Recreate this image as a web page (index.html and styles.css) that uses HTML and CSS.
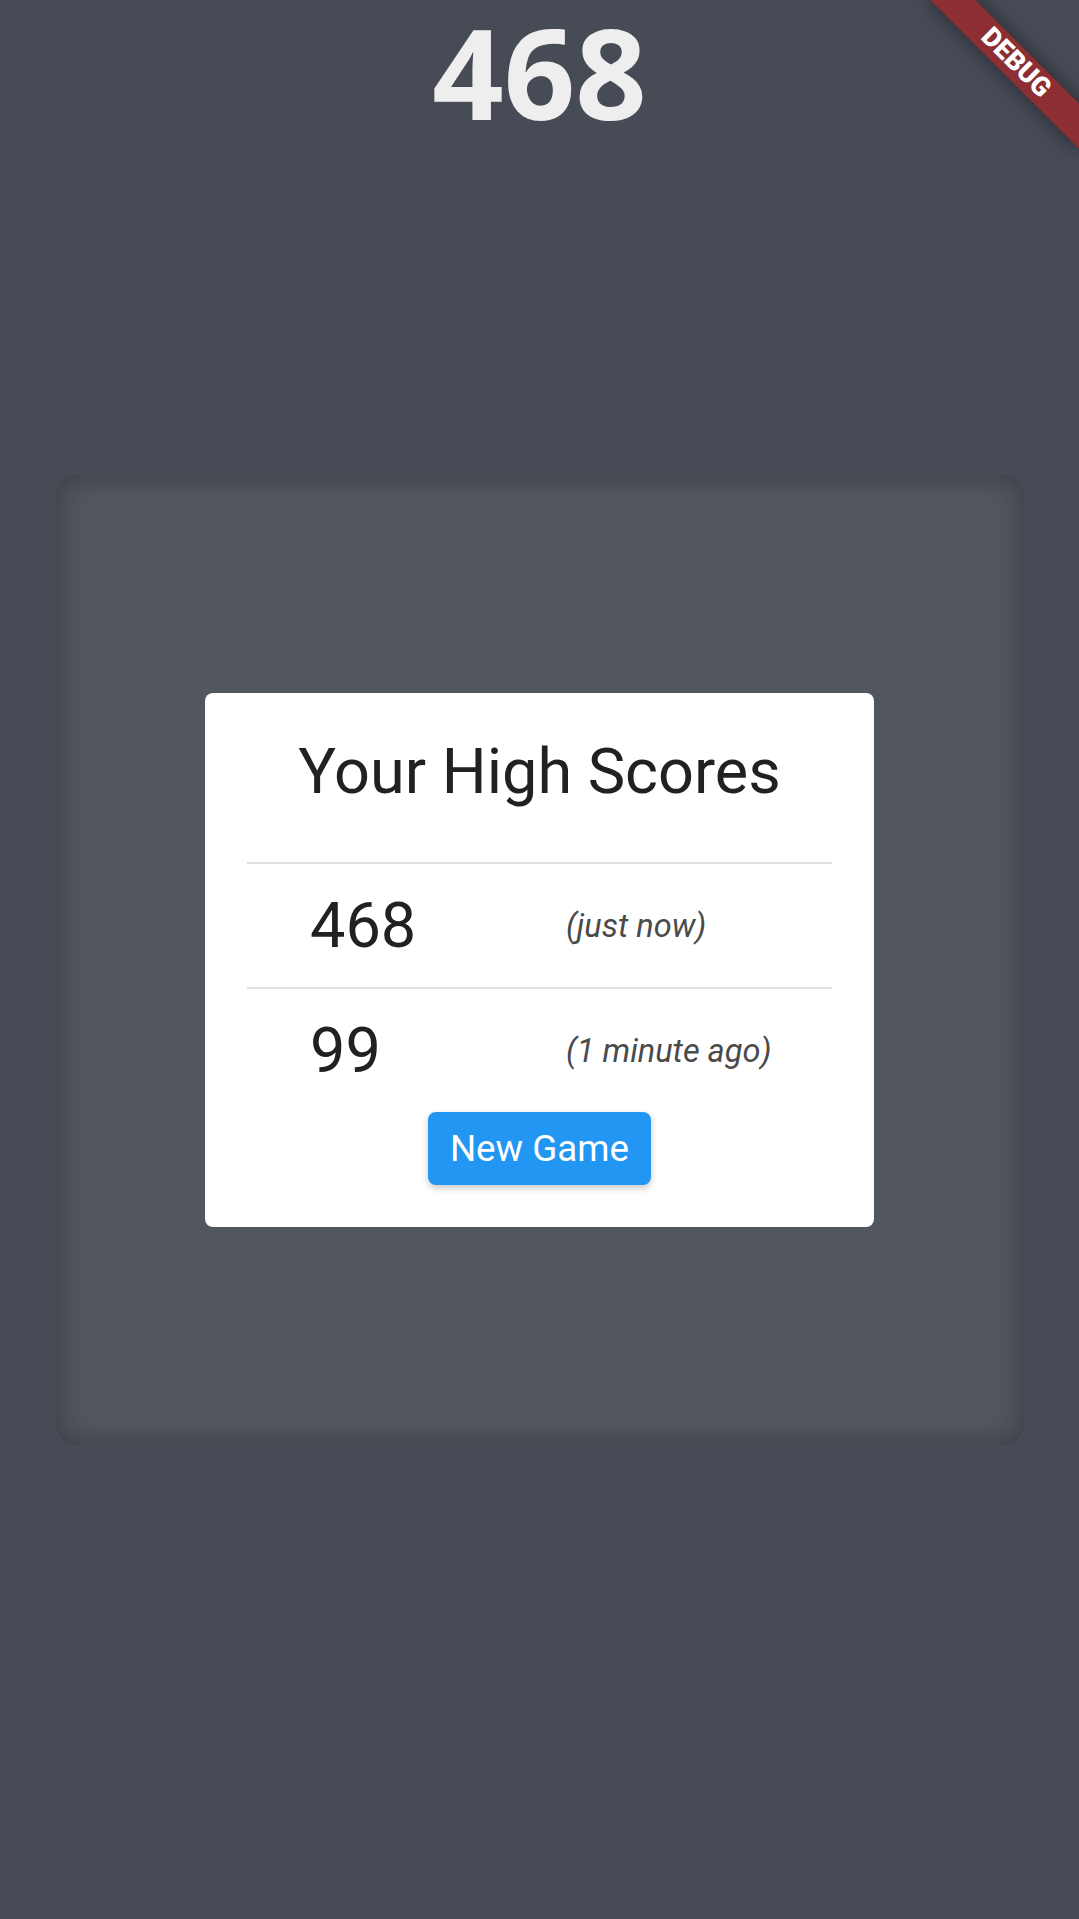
FILE: index.html
```html
<!DOCTYPE html>
<html lang="en">
<head>
<meta charset="utf-8">
<title>High Scores</title>
<link rel="stylesheet" href="styles.css">
</head>
<body>
  <div class="screen">
    <h1 class="score">468</h1>
    <div class="board">
      <div class="card">
        <h2 class="card-title">Your High Scores</h2>
        <div class="divider"></div>
        <div class="row">
          <span class="row-score">468</span>
          <span class="row-time">(just now)</span>
        </div>
        <div class="divider"></div>
        <div class="row">
          <span class="row-score">99</span>
          <span class="row-time">(1 minute ago)</span>
        </div>
        <div class="actions">
          <button class="btn">New Game</button>
        </div>
      </div>
    </div>
    <div class="debug-banner">DEBUG</div>
  </div>
</body>
</html>
```

FILE: styles.css
```css
* { box-sizing: border-box; }

html, body {
  margin: 0;
  padding: 0;
  background: #474b56;
}

.screen {
  position: relative;
  width: 1079px;
  height: 1919px;
  overflow: hidden;
  display: flex;
  flex-direction: column;
  align-items: center;
  font-family: Roboto, "Noto Sans", sans-serif;
}

.score {
  margin: 0;
  padding-top: 9px;
  font-family: "Open Sans", "Noto Sans", sans-serif;
  font-weight: 700;
  font-size: 125px;
  line-height: 125px;
  color: #eeeeee;
}

.board {
  margin-top: 341px;
  width: 968px;
  height: 970px;
  border-radius: 20px;
  background: #52565f;
  box-shadow: inset 0 0 26px 3px rgba(0, 0, 0, 0.27);
  display: flex;
  align-items: center;
  justify-content: center;
}

.card {
  width: 669px;
  background: #ffffff;
  border-radius: 8px;
  padding: 42px 42px 42px;
  display: flex;
  flex-direction: column;
}

.card-title {
  margin: 0 0 53px;
  font-weight: 400;
  font-size: 63px;
  line-height: 74px;
  text-align: center;
  color: #212121;
}

.divider {
  height: 2px;
  background: #e0e0e0;
}

.row {
  height: 123px;
  display: grid;
  grid-template-columns: 256px 1fr;
  align-items: center;
  padding-left: 63px;
}

.row-score {
  font-size: 63px;
  line-height: 74px;
  color: #212121;
}

.row-time {
  font-size: 32.5px;
  font-style: italic;
  line-height: 38px;
  color: #4a4a4a;
}

.actions {
  display: flex;
  justify-content: center;
}

.btn {
  width: 223px;
  height: 73px;
  border: none;
  border-radius: 8px;
  background: #2196f3;
  color: #ffffff;
  font-family: Roboto, sans-serif;
  font-weight: 400;
  font-size: 36.75px;
  box-shadow: 0 3px 7px rgba(0, 0, 0, 0.22);
  padding: 0;
}

.debug-banner {
  position: absolute;
  left: 911px;
  top: 47px;
  width: 210px;
  height: 31.5px;
  transform: rotate(45deg);
  background: #8d2e32;
  box-shadow: 0 0 19px rgba(0, 0, 0, 0.5);
  color: #ffffff;
  font-family: Roboto, sans-serif;
  font-weight: 900;
  font-size: 26.8px;
  line-height: 31.5px;
  text-align: center;
}
```
